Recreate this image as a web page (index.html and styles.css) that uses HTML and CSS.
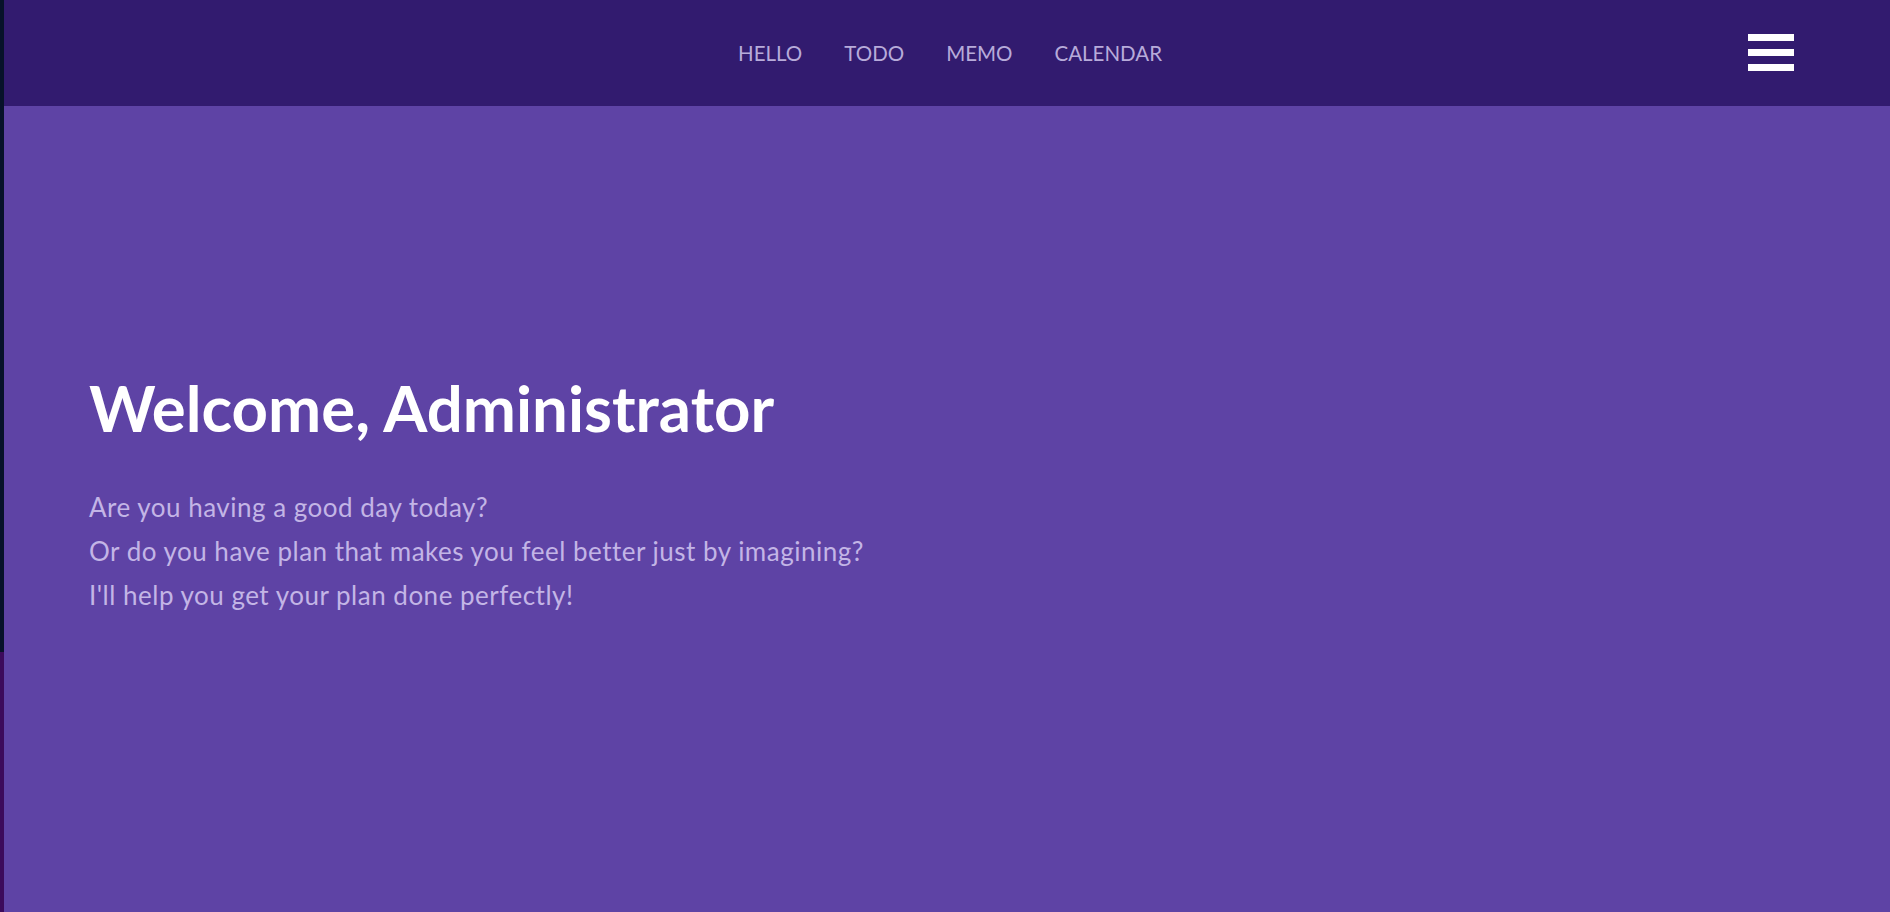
FILE: index.html
```html
<!DOCTYPE html>
<html lang="en">
<head>
<meta charset="utf-8">
<title>Welcome</title>
<link rel="stylesheet" href="styles.css">
</head>
<body>
<div class="app">
  <div class="edge"><div class="edge-top"></div><div class="edge-bottom"></div></div>
  <div class="page">
    <header class="topbar">
      <nav class="nav">
        <a class="nav-link" href="#">HELLO</a>
        <a class="nav-link" href="#">TODO</a>
        <a class="nav-link" href="#">MEMO</a>
        <a class="nav-link" href="#">CALENDAR</a>
      </nav>
      <button class="burger" aria-label="menu"><span></span><span></span><span></span></button>
    </header>
    <main class="hero">
      <h1 class="title">Welcome, Administrator</h1>
      <p class="lead">Are you having a good day today?<br>Or do you have plan that makes you feel better just by imagining?<br>I'll help you get your plan done perfectly!</p>
    </main>
  </div>
</div>
</body>
</html>
```

FILE: styles.css
```css
* { box-sizing: border-box; }
html, body { margin: 0; padding: 0; height: 100%; }
body { font-family: "Lato", "Noto Sans", sans-serif; background: #5e43a5; }
.app { display: flex; min-height: 100vh; }
.edge { width: 4px; flex: none; display: flex; flex-direction: column; }
.edge-top { height: 652px; background: #07122a; }
.edge-bottom { flex: 1; background: #3c0b5c; }
.page { flex: 1; display: flex; flex-direction: column; }
.topbar { height: 106px; flex: none; background: #321b6f; display: flex; align-items: center; justify-content: center; position: relative; }
.nav { display: flex; gap: 42px; margin-left: 6px; }
.nav-link { color: #b7abda; text-decoration: none; font-size: 20.5px; }
.burger { position: absolute; right: 96px; top: 34px; width: 46px; height: 37px; padding: 0; border: 0; background: none; display: flex; flex-direction: column; justify-content: space-between; }
.burger span { display: block; height: 7px; background: #fff; }
.hero { flex: 1; background: #5e43a5; padding: 270px 0 0 85px; }
.title { margin: 0; color: #fff; font-weight: 700; font-size: 63.5px; line-height: 1; }
.lead { margin: 45px 0 0; color: #c3b5e6; font-size: 26px; letter-spacing: 0.5px; line-height: 44px; }
```
